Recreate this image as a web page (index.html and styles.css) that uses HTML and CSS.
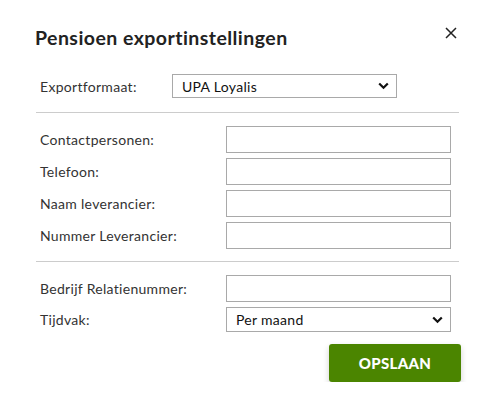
FILE: index.html
```html
<!DOCTYPE html>
<html lang="nl">
<head>
<meta charset="utf-8">
<link rel="stylesheet" href="styles.css">
</head>
<body>
<div class="dialog">
  <div class="header">
    <h1 class="title">Pensioen exportinstellingen</h1>
    <button class="close" aria-label="Sluiten">
      <svg width="12" height="12" viewBox="0 0 12 12"><path d="M1 1 L11 11 M11 1 L1 11" stroke="#222" stroke-width="1.5" fill="none"/></svg>
    </button>
  </div>
  <div class="row row-format">
    <label class="label">Exportformaat:</label>
    <div class="select select-format">
      <span>UPA Loyalis</span>
      <svg class="chev" width="11" height="8" viewBox="0 0 11 8"><path d="M1.2 1.5 L5.5 5.8 L9.8 1.5" stroke="#111" stroke-width="2.2" fill="none"/></svg>
    </div>
  </div>
  <hr class="divider">
  <div class="group">
    <div class="row"><label class="label">Contactpersonen:</label><div class="input"></div></div>
    <div class="row"><label class="label">Telefoon:</label><div class="input"></div></div>
    <div class="row"><label class="label">Naam leverancier:</label><div class="input"></div></div>
    <div class="row"><label class="label">Nummer Leverancier:</label><div class="input"></div></div>
  </div>
  <hr class="divider divider2">
  <div class="group">
    <div class="row"><label class="label">Bedrijf Relatienummer:</label><div class="input"></div></div>
    <div class="row row-sel"><label class="label">Tijdvak:</label>
      <div class="select select-tijd">
        <span>Per maand</span>
        <svg class="chev" width="11" height="8" viewBox="0 0 11 8"><path d="M1.2 1.5 L5.5 5.8 L9.8 1.5" stroke="#111" stroke-width="2.2" fill="none"/></svg>
      </div>
    </div>
  </div>
  <div class="actions">
    <button class="save">OPSLAAN</button>
  </div>
</div>
</body>
</html>
```

FILE: styles.css
```css
html, body {
  margin: 0;
  padding: 0;
  background: #fff;
}
body {
  font-family: Lato, "Liberation Sans", sans-serif;
  color: #333;
  font-size: 14px;
  letter-spacing: 0.3px;
}
.dialog {
  width: 496px;
  box-sizing: border-box;
  padding: 23px 37px 0 36px;
}
.header {
  display: flex;
  justify-content: space-between;
  align-items: flex-start;
  height: 51px;
}
.title {
  margin: 0 0 0 -1px;
  font-size: 19.5px;
  font-weight: 700;
  color: #222;
  line-height: 30px;
  letter-spacing: 0.45px;
}
.close {
  border: 0;
  background: none;
  padding: 0;
  margin: 4px 2px 0 0;
  width: 12px;
  height: 12px;
  display: flex;
}
.row {
  display: flex;
  align-items: center;
  height: 27px;
}
.label {
  padding-left: 4px;
  width: 186px;
  flex: none;
}
.row-format .label {
  width: 132px;
}
.row-format {
  height: 24px;
}
.input {
  width: 225px;
  height: 27px;
  box-sizing: border-box;
  border: 1px solid #a9a9a9;
  background: #fff;
}
.select {
  height: 24px;
  box-sizing: border-box;
  border: 1px solid #a9a9a9;
  display: flex;
  align-items: center;
  justify-content: space-between;
  padding: 0 7px 0 9px;
  color: #111;
}
.select-format {
  width: 225px;
}
.select-tijd {
  width: 225px;
  height: 25px;
}
.divider {
  border: 0;
  border-top: 1px solid #ccc;
  margin: 14px 0 13px 0;
}
.divider2 {
  margin: 12px 0 13px 0;
}
.group {
  display: flex;
  flex-direction: column;
  gap: 5px;
}
.row-sel {
  height: 25px;
}
.actions {
  display: flex;
  justify-content: flex-end;
  padding-top: 12px;
  margin-right: -2px;
}
.save {
  width: 132px;
  height: 38px;
  border: 0;
  border-radius: 3px;
  background: #4b8500;
  color: #fff;
  font-family: Lato, "Liberation Sans", sans-serif;
  font-weight: 900;
  font-size: 15px;
  letter-spacing: 0.3px;
  box-shadow: 0 3px 6px rgba(0,0,0,0.18);
}
```
